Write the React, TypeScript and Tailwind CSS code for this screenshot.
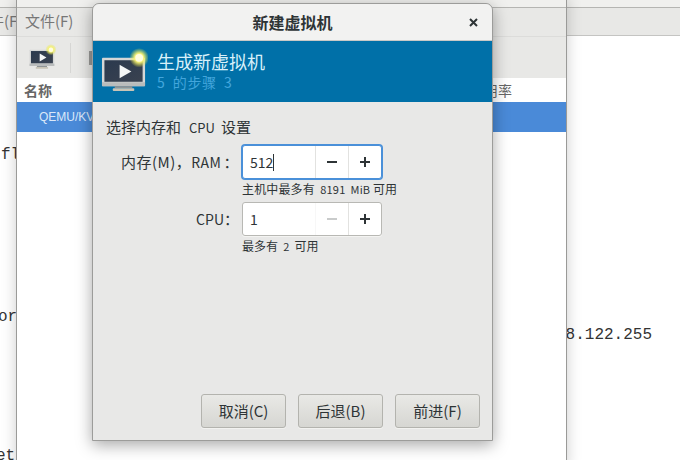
const sans = { fontFamily: '"Noto Sans CJK SC", "Liberation Sans", sans-serif' };

// small monitor with a play arrow and a glowing star, used in toolbar and banner
const VmIcon = ({ size }: { size: number }) => (
  <svg width={size} height={size} viewBox="0 0 48 48">
    <defs>
      <radialGradient id={`glow${size}`}>
        <stop offset="0" stopColor="#fffbd0" />
        <stop offset="0.45" stopColor="#f6f27a" />
        <stop offset="1" stopColor="#e8e840" stopOpacity="0" />
      </radialGradient>
      <linearGradient id={`scr${size}`} x1="0" y1="0" x2="1" y2="1">
        <stop offset="0" stopColor="#2b3a4e" />
        <stop offset="1" stopColor="#3a4250" />
      </linearGradient>
    </defs>
    <rect x="1" y="10" width="44" height="29" rx="1" fill="#d5d7d6" />
    <rect x="3.5" y="12.5" width="39" height="22" fill={`url(#scr${size})`} />
    <rect x="1" y="35" width="44" height="4" fill="#b9bcbc" />
    <rect x="14" y="39" width="18" height="2" fill="#8f9496" />
    <rect x="12" y="41" width="22" height="3" rx="1" fill="#c9c4b6" />
    <path d="M19 17 L31 24 L19 31 Z" fill="#f4f6f6" />
    <circle cx="39" cy="10" r="10" fill={`url(#glow${size})`} />
    <circle cx="39" cy="10" r="4" fill="#fffde0" />
  </svg>
);

const Stepper = ({ value, focused, minusOff, caret }: { value: string; focused?: boolean; minusOff?: boolean; caret?: boolean }) => (
  <div
    className={`flex w-[140px] h-[34px] rounded-[3px] bg-white border ${
      focused ? "border-[#4a90d9] shadow-[0_0_0_1px_#4a90d9]" : "border-[#b8b8b4] shadow-[0_1px_0_#f4f4f2]"
    }`}
  >
    <div className="flex-1 flex items-center pl-[7px] text-[14px] text-[#2e3436]" style={sans}>
      {value}
      {caret && <span className="w-px h-[17px] bg-[#2e3436]" />}
    </div>
    <div className={`w-[33px] flex items-center justify-center border-l border-[#e2e2e0] ${minusOff ? "opacity-25" : ""}`}>
      <span className="w-[10px] h-[2px] bg-[#2e3436]" />
    </div>
    <div className="w-[33px] relative flex items-center justify-center border-l border-[#e2e2e0]">
      <span className="w-[10px] h-[2px] bg-[#2e3436]" />
      <span className="absolute w-[2px] h-[10px] bg-[#2e3436]" />
    </div>
  </div>
);

const FootButton = ({ label }: { label: string }) => (
  <button
    className="w-[85px] h-[34px] rounded-[3px] border border-[#b3b3ae] bg-gradient-to-b from-[#e9e9e6] to-[#d6d6d2] text-[15px] text-[#2e3436] shadow-[0_1px_0_#f2f2f0]"
    style={sans}
  >
    {label}
  </button>
);

export default function App() {
  return (
    <div className="relative w-[680px] h-[460px] overflow-hidden bg-white" style={sans}>
      {/* back terminal window */}
      <div className="absolute inset-0 flex flex-col">
        <div className="h-[8px] bg-[#f0f0ee] border-b border-[#b5b5b2]" />
        <div className="h-[28px] bg-[#e8e8e6] border-b border-[#c4c4c2] text-[15px] text-[#777] leading-[26px] -indent-[11px]">
          件(F
        </div>
        <div className="flex-1 relative font-['Liberation_Mono'] text-[16px] text-[#333]">
          <span className="absolute left-[1px] top-[107px]">fl</span>
          <span className="absolute left-[-2px] top-[269px]">or(</span>
          <span className="absolute left-[-4px] top-[408px]">et(</span>
          <span className="absolute left-[556px] top-[287px]">68.122.255</span>
        </div>
      </div>

      {/* virt-manager main window */}
      <div className="absolute left-[16px] top-[-2px] w-[551px] h-[470px] flex flex-col bg-white border-x border-[#9a9a98] shadow-[0_0_14px_rgba(0,0,0,0.2)]">
        <div className="h-[10px] bg-[#f0f0ee] border-b border-[#b5b5b2]" />
        <div className="h-[28px] bg-[#e8e8e6] text-[15px] text-[#777] pl-[8px] leading-[26px]">文件(F)</div>
        <div className="h-[42px] bg-[#e8e8e6] flex items-center pl-[12px] border-t border-[#dcdcda]">
          <VmIcon size={27} />
          <span className="ml-[14px] w-px h-[30px] bg-[#d6d6d4]" />
          <span className="ml-[18px] w-[8px] h-[14px] bg-[#9a9a98]" />
        </div>
        <div className="h-[24px] bg-white flex items-center px-[7px] text-[14px] font-bold text-[#666]">
          <span>名称</span>
          <span className="ml-auto mr-[47px] font-normal">内存使用率</span>
        </div>
        <div className="h-[30px] bg-[#4a8ad8] pl-[22px] flex items-center text-[12px] text-[#dbe8f8]" style={{ fontFamily: '"Liberation Sans", sans-serif' }}>
          QEMU/KVM
        </div>
      </div>

      {/* new vm dialog */}
      <div className="absolute left-[92px] top-[3px] w-[401px] h-[438px] flex flex-col rounded-t-[7px] bg-[#e8e8e7] border border-[#9c9c9a] shadow-[0_4px_16px_rgba(0,0,0,0.35)]">
        <div className="relative h-[36px] shrink-0 rounded-t-[7px] bg-[#f2f2f1] flex items-center justify-center text-[16px] font-bold text-[#2e3436]">
          新建虚拟机
          <svg className="absolute right-[14px] top-[14px]" width="9" height="9" viewBox="0 0 9 9">
            <path d="M1 1 L8 8 M8 1 L1 8" stroke="#2e3436" strokeWidth="2" />
          </svg>
        </div>
        <div className="h-[62px] shrink-0 bg-[#0070a8] border-t border-[#c9c9c7] flex items-center pl-[8px] gap-[9px]">
          <VmIcon size={47} />
          <div className="flex flex-col -mt-[2px]">
            <span className="text-[18px] leading-[24px] text-[#d8f0fa]">生成新虚拟机</span>
            <span className="text-[14px] leading-[19px] whitespace-pre tracking-[0.6px] text-[#43a6dc]">5  的步骤  3</span>
          </div>
        </div>
        <div className="flex-1 flex flex-col pl-[13px] pr-[12px] pt-[15px] pb-[12px]">
          <div className="text-[15px] leading-[20px] text-[#2e3436]">
            选择内存和<span className="ml-[8px] mr-[6px] text-[13px]">CPU</span>设置
          </div>
          <div className="mt-[7px] grid grid-cols-[136px_auto] justify-start">
            <div className="flex items-center justify-end pr-[3px] text-[15px] tracking-[0.5px] text-[#2e3436]">
              内存(M)，<span className="mr-[2px] text-[14px]">RAM</span>：
            </div>
            <Stepper value="512" focused caret />
            <div />
            <div className="mt-[2px] h-[20px] text-[12px] leading-[16px] whitespace-pre tracking-[0.15px] text-[#2e3436]">
              主机中最多有 <span className="text-[11px]"> 8191  MiB </span>可用
            </div>
            <div className="mt-[1px] flex items-center justify-end pr-[3px] text-[15px] text-[#2e3436]">
              <span className="text-[14px]">CPU</span>：
            </div>
            <div className="mt-[1px]">
              <Stepper value="1" minusOff />
            </div>
            <div />
            <div className="mt-[2px] text-[12px] leading-[16px] whitespace-pre text-[#2e3436]">
              最多有 <span className="text-[11px]"> 2 </span> 可用
            </div>
          </div>
          <div className="mt-auto flex justify-end gap-[12px]">
            <FootButton label="取消(C)" />
            <FootButton label="后退(B)" />
            <FootButton label="前进(F)" />
          </div>
        </div>
      </div>
    </div>
  );
}
